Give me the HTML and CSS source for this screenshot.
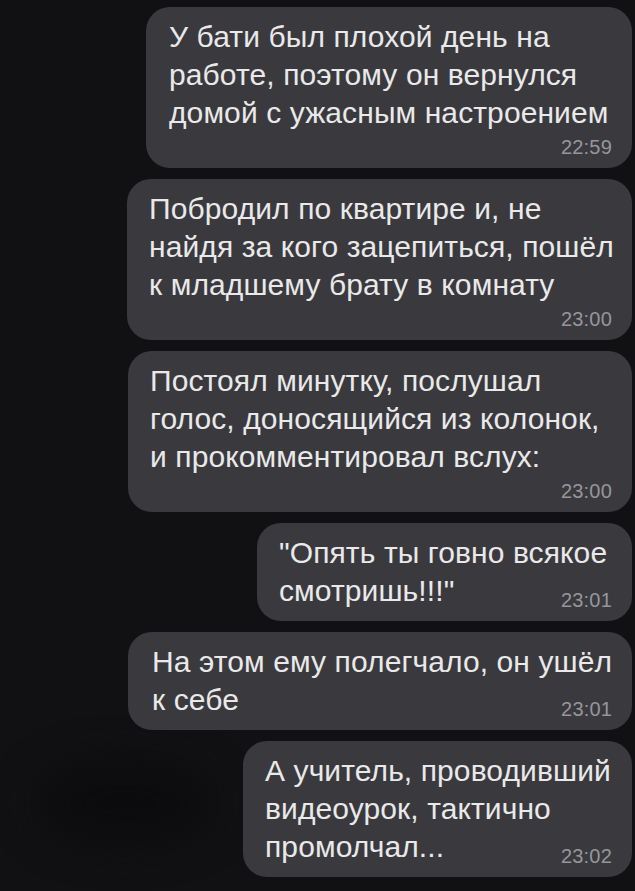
FILE: index.html
```html
<!DOCTYPE html>
<html lang="ru">
<head>
<meta charset="utf-8">
<title>Чат</title>
<link rel="stylesheet" href="styles.css">
</head>
<body>
<div class="smudge"></div>
<main class="chat">
  <div class="bubble w1">
    <p class="text">У бати был плохой день на<br>работе, поэтому он вернулся<br>домой с ужасным настроением</p>
    <div class="meta"><span class="time">22:59</span></div>
  </div>
  <div class="bubble w2">
    <p class="text">Побродил по квартире и, не<br>найдя за кого зацепиться, пошёл<br>к младшему брату в комнату</p>
    <div class="meta"><span class="time">23:00</span></div>
  </div>
  <div class="bubble w3">
    <p class="text">Постоял минутку, послушал<br>голос, доносящийся из колонок,<br>и прокомментировал вслух:</p>
    <div class="meta"><span class="time">23:00</span></div>
  </div>
  <div class="bubble inline w4">
    <p class="text">"Опять ты говно всякое<br>смотришь!!!"</p>
    <span class="time">23:01</span>
  </div>
  <div class="bubble inline w5">
    <p class="text">На этом ему полегчало, он ушёл<br>к себе</p>
    <span class="time">23:01</span>
  </div>
  <div class="bubble inline w6">
    <p class="text">А учитель, проводивший<br>видеоурок, тактично<br>промолчал...</p>
    <span class="time">23:02</span>
  </div>
</main>
</body>
</html>
```
FILE: styles.css
```css
* { box-sizing: border-box; }
html, body {
  margin: 0;
  padding: 0;
  background: #111114;
  height: 100%;
}
body {
  position: relative;
  overflow: hidden;
  font-family: "Liberation Sans", Arial, sans-serif;
}
.chat {
  position: relative;
  display: flex;
  flex-direction: column;
  align-items: flex-end;
  gap: 11px;
  padding: 7px 3px 0 0;
}
.bubble {
  background: #3a3a3e;
  border-radius: 24px;
  padding: 11px 20px 11px 22px;
  color: #e9e9ea;
}
.text {
  margin: 0;
  font-size: 30px;
  line-height: 38px;
  letter-spacing: 0.1px;
  white-space: nowrap;
}
.meta {
  display: flex;
  justify-content: flex-end;
  margin-top: 5px;
}
.time {
  font-size: 20px;
  line-height: 20px;
  color: #96969b;
  letter-spacing: 0.2px;
}
.bubble.inline {
  display: grid;
  grid-template-areas: "body";
}
.bubble.inline .text,
.bubble.inline .time {
  grid-area: body;
}
.bubble.inline .time {
  justify-self: end;
  align-self: end;
}
.w1 { width: 486px; padding-left: 23px; }
.w2 { width: 505px; }
.w3 { width: 504px; }
.w4 { width: 375px; }
.w5 { width: 504px; padding-left: 24px; }
.w6 { width: 389px; }
.smudge {
  position: absolute;
  left: 40px;
  top: 765px;
  width: 170px;
  height: 75px;
  border-radius: 50%;
  background: #0b0b0d;
  filter: blur(22px);
}
```
